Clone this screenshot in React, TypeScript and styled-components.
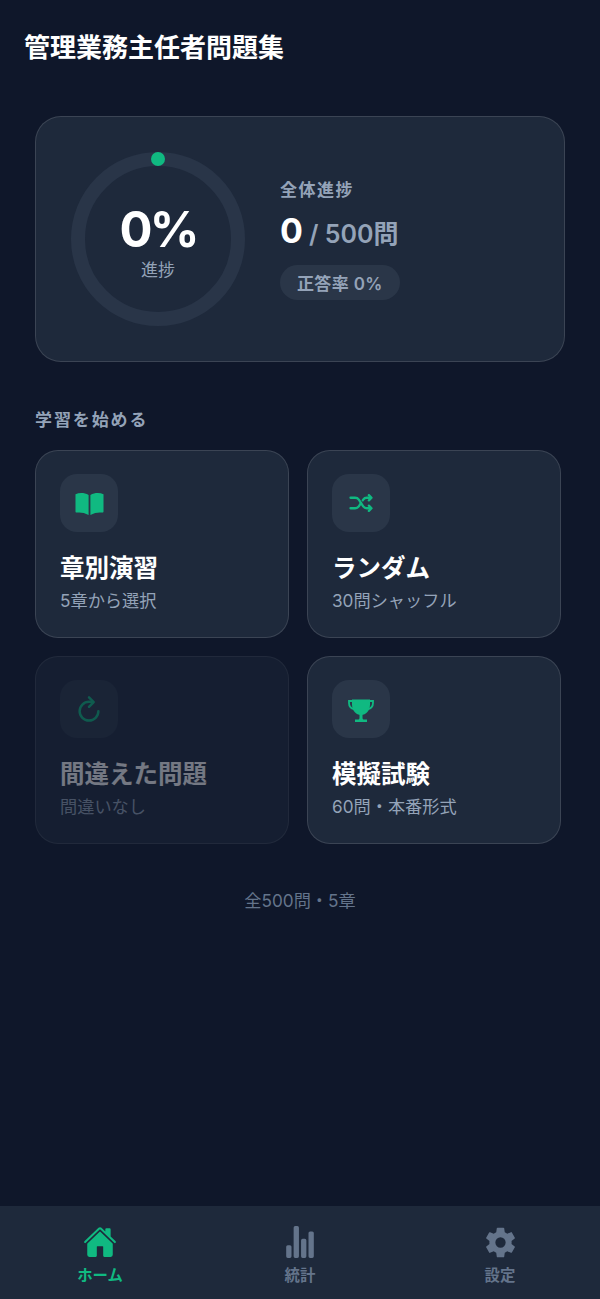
import type { ReactNode } from "react";
import styled, { createGlobalStyle } from "styled-components";
import {
  IoHome,
  IoRefresh,
  IoSettingsSharp,
  IoShuffle,
  IoStatsChart,
} from "react-icons/io5";

const GlobalStyle = createGlobalStyle`
  html, body {
    margin: 0;
    padding: 0;
    background: #0f172a;
  }
  * { box-sizing: border-box; }
  body {
    font-family: Inter, "Noto Sans CJK JP", sans-serif;
  }
`;

const Page = styled.div`
  width: 600px;
  height: 1299px;
  display: flex;
  flex-direction: column;
  background: #0f172a;
`;

const Header = styled.header`
  height: 94px;
  padding: 30px 24px 0;
`;

const Title = styled.h1`
  margin: 0;
  font-size: 26px;
  line-height: 36px;
  font-weight: 700;
  color: #ffffff;
`;

const Main = styled.main`
  flex: 1;
  padding: 22px 35px 0;
`;

const HeroCard = styled.section`
  width: 530px;
  height: 246px;
  display: flex;
  align-items: center;
  gap: 35px;
  padding: 0 35px;
  background: #1e293b;
  border: 1px solid rgba(255, 255, 255, 0.13);
  border-radius: 26px;
`;

const Ring = styled.div`
  position: relative;
  width: 174px;
  height: 174px;
  flex: none;
  display: flex;
  flex-direction: column;
  align-items: center;
  justify-content: center;
`;

const RingSvg = styled.svg`
  position: absolute;
  inset: 0;
`;

const Percent = styled.div`
  font-size: 49px;
  line-height: 56px;
  font-weight: 700;
  letter-spacing: -3px;
  color: #ffffff;
  margin-top: 5px;
`;

const RingLabel = styled.div`
  margin-top: 1px;
  font-size: 17px;
  line-height: 22px;
  color: #94a3b8;
`;

const Summary = styled.div`
  display: flex;
  flex-direction: column;
  align-items: flex-start;
`;

const SummaryLabel = styled.div`
  font-size: 17px;
  line-height: 22px;
  font-weight: 600;
  letter-spacing: 1.5px;
  color: #94a3b8;
`;

const Count = styled.div`
  margin-top: 8px;
  font-size: 34px;
  line-height: 44px;
  font-weight: 700;
  color: #ffffff;
`;

const CountTotal = styled.span`
  margin-left: 6px;
  font-size: 25px;
  font-weight: 600;
  color: #94a3b8;
`;

const Pill = styled.div`
  margin-top: 9px;
  height: 35px;
  padding: 0 17px;
  display: flex;
  align-items: center;
  font-size: 17px;
  font-weight: 600;
  letter-spacing: 0.35px;
  color: #94a3b8;
  background: #2a3648;
  border-radius: 18px;
`;

const SectionLabel = styled.h2`
  margin: 47px 0 19px;
  font-size: 17px;
  line-height: 22px;
  font-weight: 600;
  letter-spacing: 1.9px;
  color: #94a3b8;
`;

const MenuGrid = styled.div`
  display: grid;
  grid-template-columns: 254px 254px;
  grid-auto-rows: 188px;
  gap: 18px;
`;

const MenuCard = styled.div<{ $disabled?: boolean }>`
  padding: 23px 24px 0;
  background: #1e293b;
  border: 1px solid rgba(255, 255, 255, 0.13);
  border-radius: 23px;
  opacity: ${(p) => (p.$disabled ? 0.42 : 1)};
`;

const IconBox = styled.div`
  width: 58px;
  height: 58px;
  display: flex;
  align-items: center;
  justify-content: center;
  background: #2a3648;
  border-radius: 17px;
  color: #10b981;
`;

const ThickShuffle = styled(IoShuffle)`
  path { stroke-width: 42px; }
`;

const ThickRefresh = styled(IoRefresh)`
  path { stroke-width: 42px; }
`;

const CardTitle = styled.div`
  margin-top: 19px;
  font-size: 24.5px;
  line-height: 34px;
  font-weight: 700;
  color: #ffffff;
`;

const CardSub = styled.div`
  margin-top: 4px;
  font-size: 17.2px;
  line-height: 24px;
  color: #94a3b8;
`;

const FootNote = styled.p`
  margin: 45px 0 0;
  text-align: center;
  font-size: 17.2px;
  line-height: 24px;
  color: #64748b;
`;

const TabBar = styled.nav`
  height: 93px;
  display: grid;
  grid-template-columns: repeat(3, 1fr);
  background: #1e293b;
`;

const Tab = styled.div<{ $active?: boolean }>`
  display: flex;
  flex-direction: column;
  align-items: center;
  padding-top: 19px;
  color: ${(p) => (p.$active ? "#10b981" : "#64748b")};
`;

const TabIcon = styled.div`
  height: 34px;
  display: flex;
  align-items: center;
  justify-content: center;
`;

const TabLabel = styled.span`
  margin-top: 7px;
  font-size: 15.4px;
  line-height: 20px;
  font-weight: 600;
`;

const BookIcon = () => (
  <svg width="29" height="23" viewBox="0 0 29 23" fill="currentColor">
    <path d="M0.5 2.2C4.5 0.4 9.5 0.6 13.6 3V23C9.5 20.6 5 20 1.6 20.6C0.9 20.7 0.5 20.2 0.5 19.6Z" />
    <path d="M28.5 2.2C24.5 0.4 19.5 0.6 15.4 3V23C19.5 20.6 24 20 27.4 20.6C28.1 20.7 28.5 20.2 28.5 19.6Z" />
  </svg>
);

const TrophyIcon = () => (
  <svg width="26" height="27" viewBox="0 -3 26 27" fill="currentColor">
    <path d="M4 0.5H22V5.5C22 11.5 18 16 13 16C8 16 4 11.5 4 5.5Z" />
    <path
      d="M4.5 2H1V4C1 7 3 9.5 6.5 10.5M21.5 2H25V4C25 7 23 9.5 19.5 10.5"
      fill="none"
      stroke="currentColor"
      strokeWidth="1.8"
    />
    <path d="M11.5 15H14.5V19C14.5 19.8 15 20.5 16 20.5H19V23H7V20.5H10C11 20.5 11.5 19.8 11.5 19Z" />
  </svg>
);

type MenuItem = {
  icon: ReactNode;
  title: string;
  sub: string;
  disabled?: boolean;
};

const menu: MenuItem[] = [
  { icon: <BookIcon />, title: "章別演習", sub: "5章から選択" },
  { icon: <ThickShuffle size={28} />, title: "ランダム", sub: "30問シャッフル" },
  { icon: <ThickRefresh size={30} />, title: "間違えた問題", sub: "間違いなし", disabled: true },
  { icon: <TrophyIcon />, title: "模擬試験", sub: "60問・本番形式" },
];

export default function App() {
  return (
    <Page>
      <GlobalStyle />
      <Header>
        <Title>管理業務主任者問題集</Title>
      </Header>
      <Main>
        <HeroCard>
          <Ring>
            <RingSvg width="174" height="174" viewBox="0 0 174 174">
              <circle cx="87" cy="87" r="80" fill="none" stroke="#293548" strokeWidth="14" />
              <circle cx="87" cy="7" r="7" fill="#10b981" />
            </RingSvg>
            <Percent>0%</Percent>
            <RingLabel>進捗</RingLabel>
          </Ring>
          <Summary>
            <SummaryLabel>全体進捗</SummaryLabel>
            <Count>
              0<CountTotal>/ 500問</CountTotal>
            </Count>
            <Pill>正答率 0%</Pill>
          </Summary>
        </HeroCard>
        <SectionLabel>学習を始める</SectionLabel>
        <MenuGrid>
          {menu.map((item) => (
            <MenuCard key={item.title} $disabled={item.disabled}>
              <IconBox>{item.icon}</IconBox>
              <CardTitle>{item.title}</CardTitle>
              <CardSub>{item.sub}</CardSub>
            </MenuCard>
          ))}
        </MenuGrid>
        <FootNote>全500問・5章</FootNote>
      </Main>
      <TabBar>
        <Tab $active>
          <TabIcon>
            <IoHome size={34} />
          </TabIcon>
          <TabLabel>ホーム</TabLabel>
        </Tab>
        <Tab>
          <TabIcon>
            <IoStatsChart size={34} />
          </TabIcon>
          <TabLabel>統計</TabLabel>
        </Tab>
        <Tab>
          <TabIcon>
            <IoSettingsSharp size={33} />
          </TabIcon>
          <TabLabel>設定</TabLabel>
        </Tab>
      </TabBar>
    </Page>
  );
}
